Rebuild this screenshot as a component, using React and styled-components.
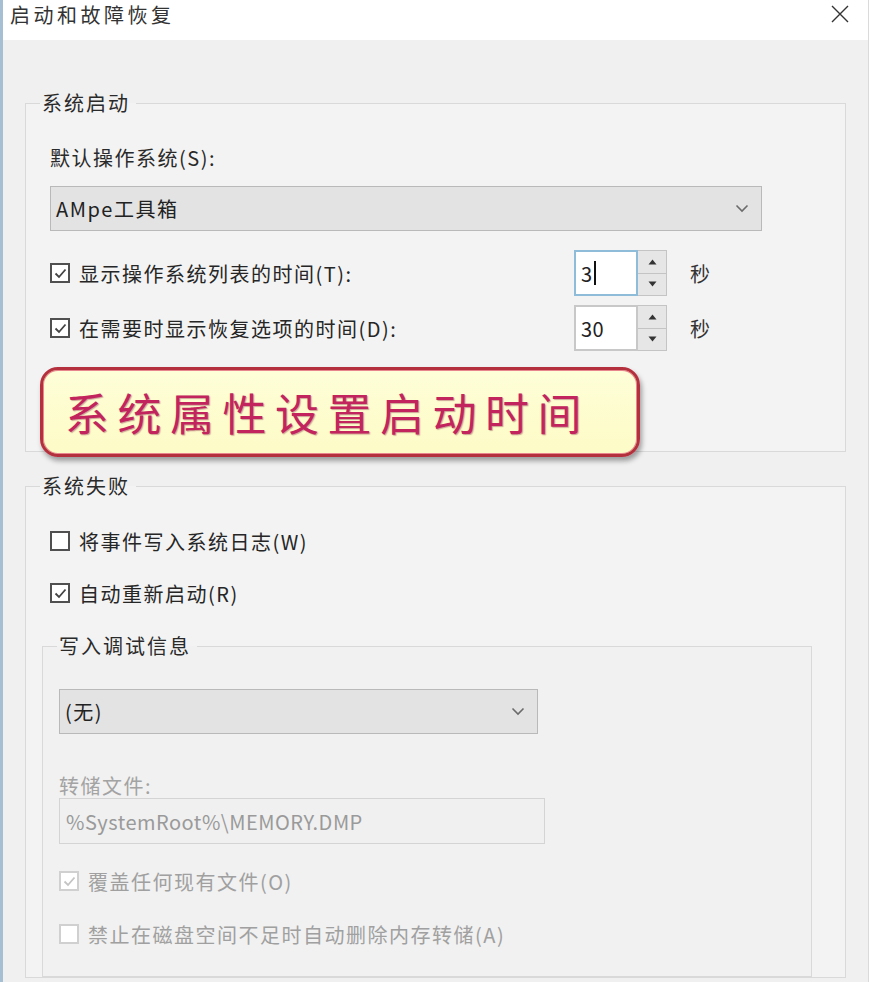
import React from "react";
import styled, { createGlobalStyle } from "styled-components";

const GlobalStyle = createGlobalStyle`
  html, body { margin: 0; padding: 0; background: #f0f0f0; }
  body { font-family: "Noto Sans CJK SC", "Noto Sans", sans-serif; }
  * { box-sizing: border-box; }
`;

const Window = styled.div`
  width: 869px;
  height: 982px;
  overflow: hidden;
  display: flex;
  flex-direction: column;
  background: #f0f0f0;
  border-left: 3px solid #a6bfd3;
  border-right: 1px solid #dadada;
  color: #262626;
  font-size: 20px;
  letter-spacing: 1.5px;
`;

const TitleBar = styled.div`
  height: 40px;
  flex: none;
  background: #ffffff;
  display: flex;
  align-items: flex-start;
  justify-content: space-between;
  padding: 0 16px 0 7px;
`;

const Title = styled.div`
  font-size: 20px;
  line-height: 30px;
  letter-spacing: 3.5px;
  color: #333;
`;

const CloseButton = styled.div`
  width: 24px;
  height: 28px;
  display: flex;
  align-items: center;
  justify-content: center;
  color: #333;
`;

const Body = styled.div`
  flex: 1;
  padding: 50px 22px 0 22px;
  display: flex;
  flex-direction: column;
`;

const Group = styled.fieldset`
  margin: ${(p) => p.$mt || 0}px ${(p) => p.$mr || 0}px 0 ${(p) => p.$ml || 0}px;
  padding: 0;
  border: 1px solid #d9d9d9;
  border-radius: 0;
  min-width: 0;
  background: ${(p) => (p.$inner ? "#f1f1f1" : "#f3f3f3")};
`;

const Legend = styled.legend`
  margin-left: 14px;
  padding: 0 6px 0 2px;
  font-size: 20px;
  line-height: 26px;
  letter-spacing: 2px;
  color: #2a2a2a;
`;

const GroupBody = styled.div`
  display: flex;
  flex-direction: column;
  padding: ${(p) => p.$pt}px ${(p) => p.$pr || 0}px ${(p) => p.$pb || 0}px ${(p) => p.$pl}px;
`;

const Label = styled.div`
  font-size: 20px;
  line-height: ${(p) => p.$lh || 26}px;
  margin-top: ${(p) => p.$mt || 0}px;
  color: ${(p) => (p.$disabled ? "#a3a3a3" : "#2a2a2a")};
`;

const Select = styled.div`
  width: ${(p) => p.$w}px;
  height: 45px;
  margin-top: ${(p) => p.$mt || 0}px;
  background: #e3e3e3;
  border: 1px solid #b9b9b9;
  display: flex;
  align-items: center;
  justify-content: space-between;
  padding: 0 12px 0 5px;
  font-size: 20px;
  color: #222;
`;

const Chevron = () => (
  <svg width="14" height="9" viewBox="0 0 14 9">
    <path d="M1.5 1.5 L7 7 L12.5 1.5" fill="none" stroke="#6b6b6b" strokeWidth="1.6" />
  </svg>
);

const Row = styled.div`
  display: flex;
  align-items: center;
  height: ${(p) => p.$h || 36}px;
  margin-top: ${(p) => p.$mt || 0}px;
`;

const CheckLabel = styled.label`
  display: flex;
  align-items: center;
  gap: 9px;
  width: ${(p) => (p.$w ? `${p.$w}px` : "auto")};
  flex: none;
  font-size: 20px;
  color: ${(p) => (p.$disabled ? "#a0a0a0" : "#262626")};
`;

const Box = styled.span`
  width: 20px;
  height: 20px;
  flex: none;
  border: 2px solid ${(p) => (p.$disabled ? "#d0d0d0" : "#505050")};
  background: #fff;
  display: flex;
  align-items: center;
  justify-content: center;
`;

const CheckBox = ({ checked, disabled }) => (
  <Box $disabled={disabled}>
    {checked && (
      <svg width="13" height="11" viewBox="0 0 13 11">
        <path
          d="M1.5 5.5 L5 9 L11.5 1.5"
          fill="none"
          stroke={disabled ? "#c4c4c4" : "#444"}
          strokeWidth="1.8"
        />
      </svg>
    )}
  </Box>
);

const Spinner = styled.div`
  display: flex;
  height: 46px;
`;

const SpinInput = styled.div`
  width: 64px;
  height: 46px;
  background: #fff;
  border: 2px solid ${(p) => (p.$focused ? "#8fbcd8" : "#c8c8c8")};
  display: flex;
  align-items: center;
  padding-left: 5px;
  font-size: 20px;
  letter-spacing: 0.5px;
  color: #222;
`;

const Caret = styled.span`
  display: inline-block;
  width: 2px;
  height: 24px;
  background: #111;
  margin-left: 1px;
`;

const SpinButtons = styled.div`
  width: 29px;
  display: flex;
  flex-direction: column;
  border: 1px solid #c4c4c4;
  border-left: none;
  background: #e6e6e6;
`;

const SpinButton = styled.div`
  flex: 1;
  display: flex;
  align-items: center;
  justify-content: center;
  & + & { border-top: 1px solid #c4c4c4; }
`;

const Arrow = ({ up }) => (
  <svg width="9" height="6" viewBox="0 0 9 6">
    <path d={up ? "M4.5 0.5 L8.5 5.5 L0.5 5.5 Z" : "M0.5 0.5 L8.5 0.5 L4.5 5.5 Z"} fill="#333" />
  </svg>
);

const Unit = styled.span`
  margin-left: 23px;
  font-size: 20px;
  color: #333;
`;

const Callout = styled.div`
  width: 600px;
  height: 90px;
  margin: 16px 0 -6px -10px;
  border: 3px solid #b5303d;
  border-radius: 18px;
  background: linear-gradient(#fefed8, #fdfbc6);
  box-shadow: 2px 4px 5px rgba(0, 0, 0, 0.35), inset 0 0 0 1px #e7868c;
  display: flex;
  align-items: center;
  padding-left: 22px;
  font-size: 44px;
  letter-spacing: 8.5px;
  color: #c2245e;
  text-shadow: 1px 1px 1px rgba(120, 0, 40, 0.35);
  position: relative;
  z-index: 1;
`;

const TextField = styled.div`
  width: ${(p) => p.$w}px;
  height: 46px;
  border: 1px solid #d4d4d4;
  background: #f0f0f0;
  display: flex;
  align-items: center;
  padding-left: 6px;
  font-size: 20px;
  letter-spacing: 0.5px;
  color: #9a9a9a;
`;

const SpinBox = ({ value, focused }) => (
  <Spinner>
    <SpinInput $focused={focused}>
      {value}
      {focused && <Caret />}
    </SpinInput>
    <SpinButtons>
      <SpinButton><Arrow up /></SpinButton>
      <SpinButton><Arrow /></SpinButton>
    </SpinButtons>
  </Spinner>
);

export default function App() {
  return (
    <>
      <GlobalStyle />
      <Window>
        <TitleBar>
          <Title>启动和故障恢复</Title>
          <CloseButton>
            <svg width="18" height="18" viewBox="0 0 18 18">
              <path d="M1 1 L17 17 M17 1 L1 17" stroke="#333" strokeWidth="1.4" />
            </svg>
          </CloseButton>
        </TitleBar>
        <Body>
          <Group>
            <Legend>系统启动</Legend>
            <GroupBody $pt={29} $pl={24}>
              <Label>默认操作系统(S):</Label>
              <Select $w={712} $mt={15}>
                <span>AMpe工具箱</span>
                <Chevron />
              </Select>
              <Row $h={46} $mt={19}>
                <CheckLabel $w={524}>
                  <CheckBox checked />
                  显示操作系统列表的时间(T):
                </CheckLabel>
                <SpinBox value="3" focused />
                <Unit>秒</Unit>
              </Row>
              <Row $h={46} $mt={9}>
                <CheckLabel $w={524}>
                  <CheckBox checked />
                  在需要时显示恢复选项的时间(D):
                </CheckLabel>
                <SpinBox value="30" />
                <Unit>秒</Unit>
              </Row>
              <Callout>系统属性设置启动时间</Callout>
            </GroupBody>
          </Group>
          <Group $mt={21}>
            <Legend>系统失败</Legend>
            <GroupBody $pt={24} $pl={24} $pr={33}>
              <Row>
                <CheckLabel>
                  <CheckBox />
                  将事件写入系统日志(W)
                </CheckLabel>
              </Row>
              <Row $mt={16}>
                <CheckLabel>
                  <CheckBox checked />
                  自动重新启动(R)
                </CheckLabel>
              </Row>
              <Group $inner $mt={22} $ml={-8}>
                <Legend>写入调试信息</Legend>
                <GroupBody $pt={30} $pl={16} $pb={24}>
                  <Select $w={479}>
                    <span>(无)</span>
                    <Chevron />
                  </Select>
                  <Label $disabled $lh={24} $mt={40}>转储文件:</Label>
                  <TextField $w={486}>%SystemRoot%\MEMORY.DMP</TextField>
                  <Row $mt={19}>
                    <CheckLabel $disabled>
                      <CheckBox checked disabled />
                      覆盖任何现有文件(O)
                    </CheckLabel>
                  </Row>
                  <Row $mt={17}>
                    <CheckLabel $disabled>
                      <CheckBox disabled />
                      禁止在磁盘空间不足时自动删除内存转储(A)
                    </CheckLabel>
                  </Row>
                </GroupBody>
              </Group>
            </GroupBody>
          </Group>
        </Body>
      </Window>
    </>
  );
}
